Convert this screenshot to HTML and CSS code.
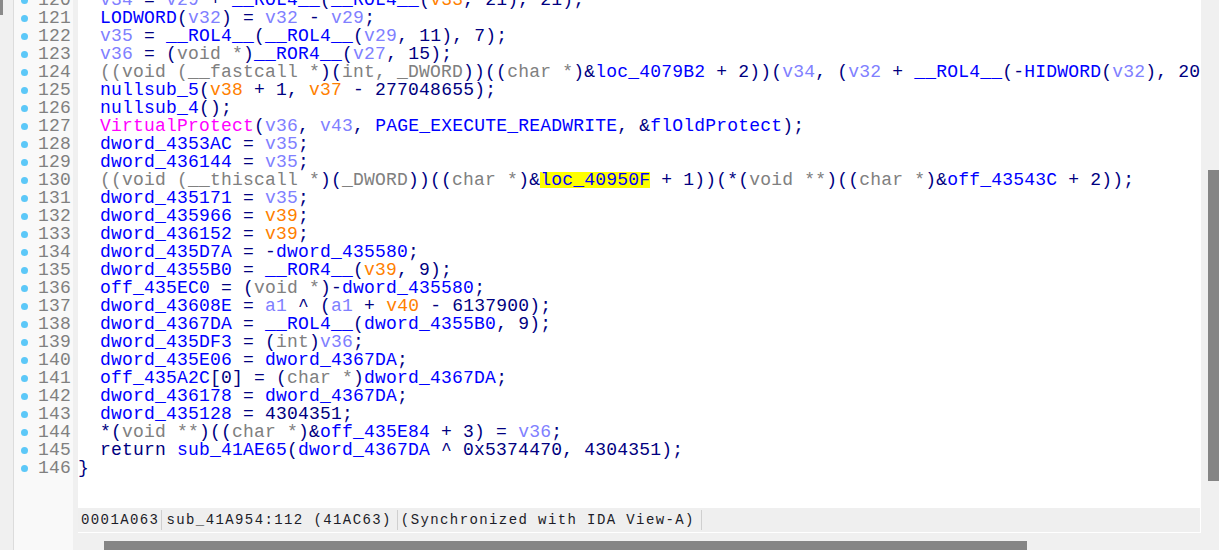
FILE: index.html
```html
<!DOCTYPE html>
<html lang="en">
<head>
    <meta charset="UTF-8">
    <title>Pseudocode-A</title>
    <link rel="stylesheet" href="styles.css">
</head>
<body>
    <div class="side"><div class="side-thumb"></div></div>

    <div class="gutter">
        <div class="ln"><span class="dot"></span><span class="num">120</span></div>
        <div class="ln"><span class="dot"></span><span class="num">121</span></div>
        <div class="ln"><span class="dot"></span><span class="num">122</span></div>
        <div class="ln"><span class="dot"></span><span class="num">123</span></div>
        <div class="ln"><span class="dot"></span><span class="num">124</span></div>
        <div class="ln"><span class="dot"></span><span class="num">125</span></div>
        <div class="ln"><span class="dot"></span><span class="num">126</span></div>
        <div class="ln"><span class="dot"></span><span class="num">127</span></div>
        <div class="ln"><span class="dot"></span><span class="num">128</span></div>
        <div class="ln"><span class="dot"></span><span class="num">129</span></div>
        <div class="ln"><span class="dot"></span><span class="num">130</span></div>
        <div class="ln"><span class="dot"></span><span class="num">131</span></div>
        <div class="ln"><span class="dot"></span><span class="num">132</span></div>
        <div class="ln"><span class="dot"></span><span class="num">133</span></div>
        <div class="ln"><span class="dot"></span><span class="num">134</span></div>
        <div class="ln"><span class="dot"></span><span class="num">135</span></div>
        <div class="ln"><span class="dot"></span><span class="num">136</span></div>
        <div class="ln"><span class="dot"></span><span class="num">137</span></div>
        <div class="ln"><span class="dot"></span><span class="num">138</span></div>
        <div class="ln"><span class="dot"></span><span class="num">139</span></div>
        <div class="ln"><span class="dot"></span><span class="num">140</span></div>
        <div class="ln"><span class="dot"></span><span class="num">141</span></div>
        <div class="ln"><span class="dot"></span><span class="num">142</span></div>
        <div class="ln"><span class="dot"></span><span class="num">143</span></div>
        <div class="ln"><span class="dot"></span><span class="num">144</span></div>
        <div class="ln"><span class="dot"></span><span class="num">145</span></div>
        <div class="ln"><span class="dot"></span><span class="num">146</span></div>
    </div>

    <div class="main">
        <div class="code">
<pre>  <span class="v">v34</span> = <span class="v">v29</span> + <span class="f">__ROL4__</span>(<span class="f">__ROL4__</span>(<span class="o">v33</span>, 21), 21);
  <span class="f">LODWORD</span>(<span class="v">v32</span>) = <span class="v">v32</span> - <span class="v">v29</span>;
  <span class="v">v35</span> = <span class="f">__ROL4__</span>(<span class="f">__ROL4__</span>(<span class="v">v29</span>, 11), 7);
  <span class="v">v36</span> = (<span class="t">void *</span>)<span class="f">__ROR4__</span>(<span class="v">v27</span>, 15);
  <span class="t">((void (__fastcall *</span>)(<span class="t">int, _DWORD</span>))((<span class="t">char *</span>)&amp;<span class="f">loc_4079B2</span> + 2))(<span class="v">v34</span>, (<span class="v">v32</span> + <span class="f">__ROL4__</span>(-<span class="f">HIDWORD</span>(<span class="v">v32</span>), 20
  <span class="f">nullsub_5</span>(<span class="o">v38</span> + 1, <span class="o">v37</span> - 277048655);
  <span class="f">nullsub_4</span>();
  <span class="m">VirtualProtect</span>(<span class="v">v36</span>, <span class="v">v43</span>, <span class="f">PAGE_EXECUTE_READWRITE</span>, &amp;<span class="f">flOldProtect</span>);
  <span class="f">dword_4353AC</span> = <span class="v">v35</span>;
  <span class="f">dword_436144</span> = <span class="v">v35</span>;
  <span class="t">((void (__thiscall *</span>)(<span class="t">_DWORD</span>))((<span class="t">char *</span>)&amp;<span class="f hl">loc_40950F</span> + 1))(*(<span class="t">void **</span>)((<span class="t">char *</span>)&amp;<span class="f">off_43543C</span> + 2));
  <span class="f">dword_435171</span> = <span class="v">v35</span>;
  <span class="f">dword_435966</span> = <span class="o">v39</span>;
  <span class="f">dword_436152</span> = <span class="o">v39</span>;
  <span class="f">dword_435D7A</span> = -<span class="f">dword_435580</span>;
  <span class="f">dword_4355B0</span> = <span class="f">__ROR4__</span>(<span class="o">v39</span>, 9);
  <span class="f">off_435EC0</span> = (<span class="t">void *</span>)-<span class="f">dword_435580</span>;
  <span class="f">dword_43608E</span> = <span class="v">a1</span> ^ (<span class="v">a1</span> + <span class="o">v40</span> - 6137900);
  <span class="f">dword_4367DA</span> = <span class="f">__ROL4__</span>(<span class="f">dword_4355B0</span>, 9);
  <span class="f">dword_435DF3</span> = (<span class="t">int</span>)<span class="v">v36</span>;
  <span class="f">dword_435E06</span> = <span class="f">dword_4367DA</span>;
  <span class="f">off_435A2C</span>[0] = (<span class="t">char *</span>)<span class="f">dword_4367DA</span>;
  <span class="f">dword_436178</span> = <span class="f">dword_4367DA</span>;
  <span class="f">dword_435128</span> = 4304351;
  *(<span class="t">void **</span>)((<span class="t">char *</span>)&amp;<span class="f">off_435E84</span> + 3) = <span class="v">v36</span>;
  return <span class="f">sub_41AE65</span>(<span class="f">dword_4367DA</span> ^ 0x5374470, 4304351);
}</pre>
        </div>

        <div class="status">
            <div class="cell c-addr">0001A063</div>
            <div class="cell c-loc">sub_41A954:112 (41AC63)</div>
            <div class="cell c-sync">(Synchronized with IDA View-A)</div>
        </div>

        <div class="hbar"><div class="hthumb"></div></div>
    </div>

    <div class="vbar"><div class="vthumb"></div></div>
</body>
</html>
```

FILE: styles.css
```css
body {
    margin: 0;
    height: 550px;
    overflow: hidden;
    display: flex;
    background: #f0f0f0;
}
.side {
    width: 13px;
    flex-shrink: 0;
    border-right: 1px solid #dcdcdc;
    background: #f0f0f0;
}
.side-thumb {
    width: 3px;
    height: 15px;
    background: #8a8a8a;
}
/* Line numbers */
.gutter {
    width: 59px;
    flex-shrink: 0;
    margin-right: 5px;
    background: #f9f9f9;
    overflow: hidden;
}
.gutter .ln {
    display: flex;
    align-items: center;
    height: 18px;
    padding-left: 7px;
    font-family: "Liberation Mono", monospace;
    font-size: 18px;
    line-height: 18px;
    letter-spacing: 0.2px;
    color: #808080;
}
.gutter .ln:first-child {
    margin-top: -9px;
}
.dot {
    width: 7px;
    height: 7px;
    border-radius: 50%;
    background: #5cc8f8;
}
.num {
    flex: 1;
    text-align: right;
    padding-right: 2px;
}
.main {
    width: 1123px;
    flex-shrink: 0;
    display: flex;
    flex-direction: column;
}
.code {
    height: 508px;
    background: #fff;
    overflow: hidden;
}
.code pre {
    margin: -9px 0 0;
    font-family: "Liberation Mono", monospace;
    font-size: 18px;
    line-height: 18px;
    letter-spacing: 0.2px;
    color: #000080;
    white-space: pre;
}
.f { color: #0000ff; }
.v { color: #8080ff; }
.o { color: #ff8000; }
.t { color: #808080; }
.m { color: #ff00ff; }
.hl {
    display: inline-block;
    line-height: 16px;
    background: #ffff00;
}
/* Status bar */
.status {
    height: 24px;
    display: flex;
    align-items: center;
    background: #efefef;
    border-bottom: 1px solid #fff;
    border-right: 1px solid #fff;
    font-family: "Liberation Mono", monospace;
    font-size: 14px;
    letter-spacing: 1.4px;
    color: #1c1c28;
}
.cell {
    height: 20px;
    line-height: 20px;
    border-right: 1px solid #cfcfcf;
    white-space: pre;
}
.c-addr { padding: 0 2px 0 3px; }
.c-loc { padding: 0 5px 0 4px; }
.c-sync { padding: 0 6px 0 3px; }
.hbar {
    padding: 8px 0 0 26px;
}
.hthumb {
    width: 923px;
    height: 9px;
    background: #858585;
}
.vbar {
    width: 11px;
    flex-shrink: 0;
    padding: 170px 0 0 7px;
}
.vthumb {
    height: 311px;
    background: #858585;
}
```
